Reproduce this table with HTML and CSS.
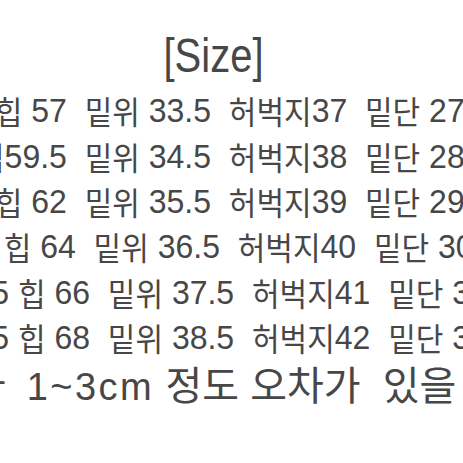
FILE: index.html
```html
<!DOCTYPE html>
<html lang="ko">
<head>
<meta charset="utf-8">
<title>Size</title>
<link rel="stylesheet" href="styles.css">
</head>
<body>
<main class="sheet">
<h1 class="title">[Size]</h1>
<div class="row"><span class="k">허리</span> 24  <span class="k">힙</span> 57  <span class="k">밑위</span> 33.5  <span class="k">허벅지</span>37  <span class="k">밑단</span> 27</div>
<div class="row"><span class="k">허리</span>25 <span class="k">힙</span>59.5  <span class="k">밑위</span> 34.5  <span class="k">허벅지</span>38  <span class="k">밑단</span> 28</div>
<div class="row"><span class="k">허리</span> 26  <span class="k">힙</span> 62  <span class="k">밑위</span> 35.5  <span class="k">허벅지</span>39  <span class="k">밑단</span> 29</div>
<div class="row"><span class="k">허리</span> 27   <span class="k">힙</span> 64  <span class="k">밑위</span> 36.5  <span class="k">허벅지</span>40  <span class="k">밑단</span> 30</div>
<div class="row"><span class="k">허리</span> &#8198;28.5 <span class="k">힙</span> 66  <span class="k">밑위</span> 37.5  <span class="k">허벅지</span>41  <span class="k">밑단</span> 31</div>
<div class="row"><span class="k">허리</span> &#8198;29.5 <span class="k">힙</span> 68  <span class="k">밑위</span> 38.5  <span class="k">허벅지</span>42  <span class="k">밑단</span> 32</div>
<p class="note"><span class="k">에</span> &#8198;<span class="k">따라</span> &#8197;<span class="num">1~3cm</span> <span class="k">정도</span> <span class="k">오차가</span>  <span class="k">있을</span>  <span class="k">수</span> <span class="k">있습니다</span></p>
</main>
</body>
</html>
```
FILE: styles.css
```css
html,
body {
  margin: 0;
  padding: 0;
  background: #ffffff;
}

body {
  width: 463px;
  height: 463px;
  overflow: hidden;
}

.sheet {
  width: 672.4px;
  margin-left: -122.7px;
  color: #474747;
  font-family: "Liberation Sans", "Noto Sans CJK KR", sans-serif;
}

.title {
  margin: 0;
  padding-top: 27px;
  font-size: 40px;
  font-weight: 400;
  line-height: 62.2px;
  text-align: center;
  transform: scaleY(1.18);
  transform-origin: 50% 72px;
}

.row {
  height: 45.4px;
  font-size: 32px;
  line-height: 45.4px;
  white-space: pre;
  transform: scaleY(1.06);
  transform-origin: 0 33.8px;
}

.k {
  font-family: "Noto Sans CJK KR", sans-serif;
  font-size: 30px;
  line-height: 1;
  vertical-align: -0.06em;
}

.note {
  margin: 0;
  font-size: 40px;
  line-height: 49.1px;
  white-space: pre;
}

.note .k {
  font-size: 40px;
  vertical-align: 0;
}

.num {
  font-size: 38px;
  letter-spacing: 2.5px;
}
```
